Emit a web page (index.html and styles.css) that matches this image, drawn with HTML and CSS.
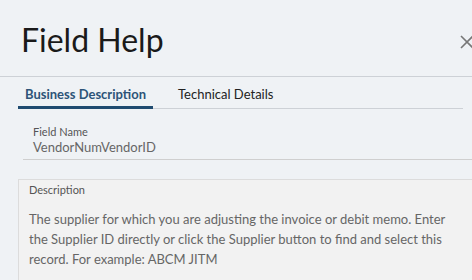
FILE: index.html
```html
<!DOCTYPE html>
<html lang="en">
<head>
    <meta charset="UTF-8">
    <meta name="viewport" content="width=device-width, initial-scale=1.0">
    <title>Field Help</title>
    <link rel="stylesheet" href="styles.css">
</head>
<body>
    <div class="panel">
        <div class="header">
            <h1>Field Help</h1>
            <button class="close" aria-label="Close">
                <svg width="16" height="16" viewBox="0 0 16 16">
                    <path d="M2 2L14 14M14 2L2 14" stroke="#777" stroke-width="1.6" fill="none"/>
                </svg>
            </button>
        </div>

        <div class="tabs">
            <div class="tab active">Business Description</div>
            <div class="tab">Technical Details</div>
        </div>

        <div class="field">
            <div class="label">Field Name</div>
            <div class="value">VendorNumVendorID</div>
        </div>

        <div class="desc">
            <div class="label">Description</div>
            <p>The supplier for which you are adjusting the invoice or debit memo. Enter the Supplier ID directly or click the Supplier button to find and select this record. For example: ABCM JITM</p>
        </div>
    </div>
</body>
</html>
```

FILE: styles.css
```css
body {
    margin: 0;
    background-color: #eff2f5;
    font-family: Lato, "Open Sans", sans-serif;
    color: #333;
    overflow: hidden;
}
.panel {
    width: 472px;
}
.header {
    display: flex;
    align-items: center;
    justify-content: space-between;
    height: 76px;
    border-bottom: 1px solid #cdd1d6;
}
h1 {
    margin: 0 0 0 21px;
    font-size: 32px;
    font-weight: 400;
    color: #1a1a1a;
    padding-top: 2px;
}
.close {
    border: none;
    background: none;
    padding: 0;
    margin-right: -3px;
    margin-top: 10px;
    cursor: pointer;
}
.tabs {
    display: flex;
    margin: 0 9px 0 18px;
    border-bottom: 1px solid #cdd1d6;
}
.tab {
    font-size: 13px;
    padding: 9px 0 5px;
    color: #222;
}
.tab.active {
    font-weight: 700;
    color: #2d5478;
    padding: 9px 7px 4px;
    border-bottom: 3px solid #1f4b70;
    margin-bottom: -1px;
    margin-right: 25px;
}
.field {
    margin: 16px 0 0 23px;
    padding: 0 0 4px 10px;
    border-bottom: 1px solid #cfcfcf;
}
.label {
    font-size: 11px;
    color: #555;
}
.value {
    font-size: 13px;
    color: #666;
    margin-top: 1px;
}
.desc {
    margin: 19px 0 0 18px;
    padding: 3px 10px 20px 10px;
    background-color: #f2f2f2;
    border: 1px solid #dcdcdc;
    border-right: none;
}
.desc p {
    margin: 13px 0 0;
    font-size: 13px;
    line-height: 20px;
    color: #666;
}
```
